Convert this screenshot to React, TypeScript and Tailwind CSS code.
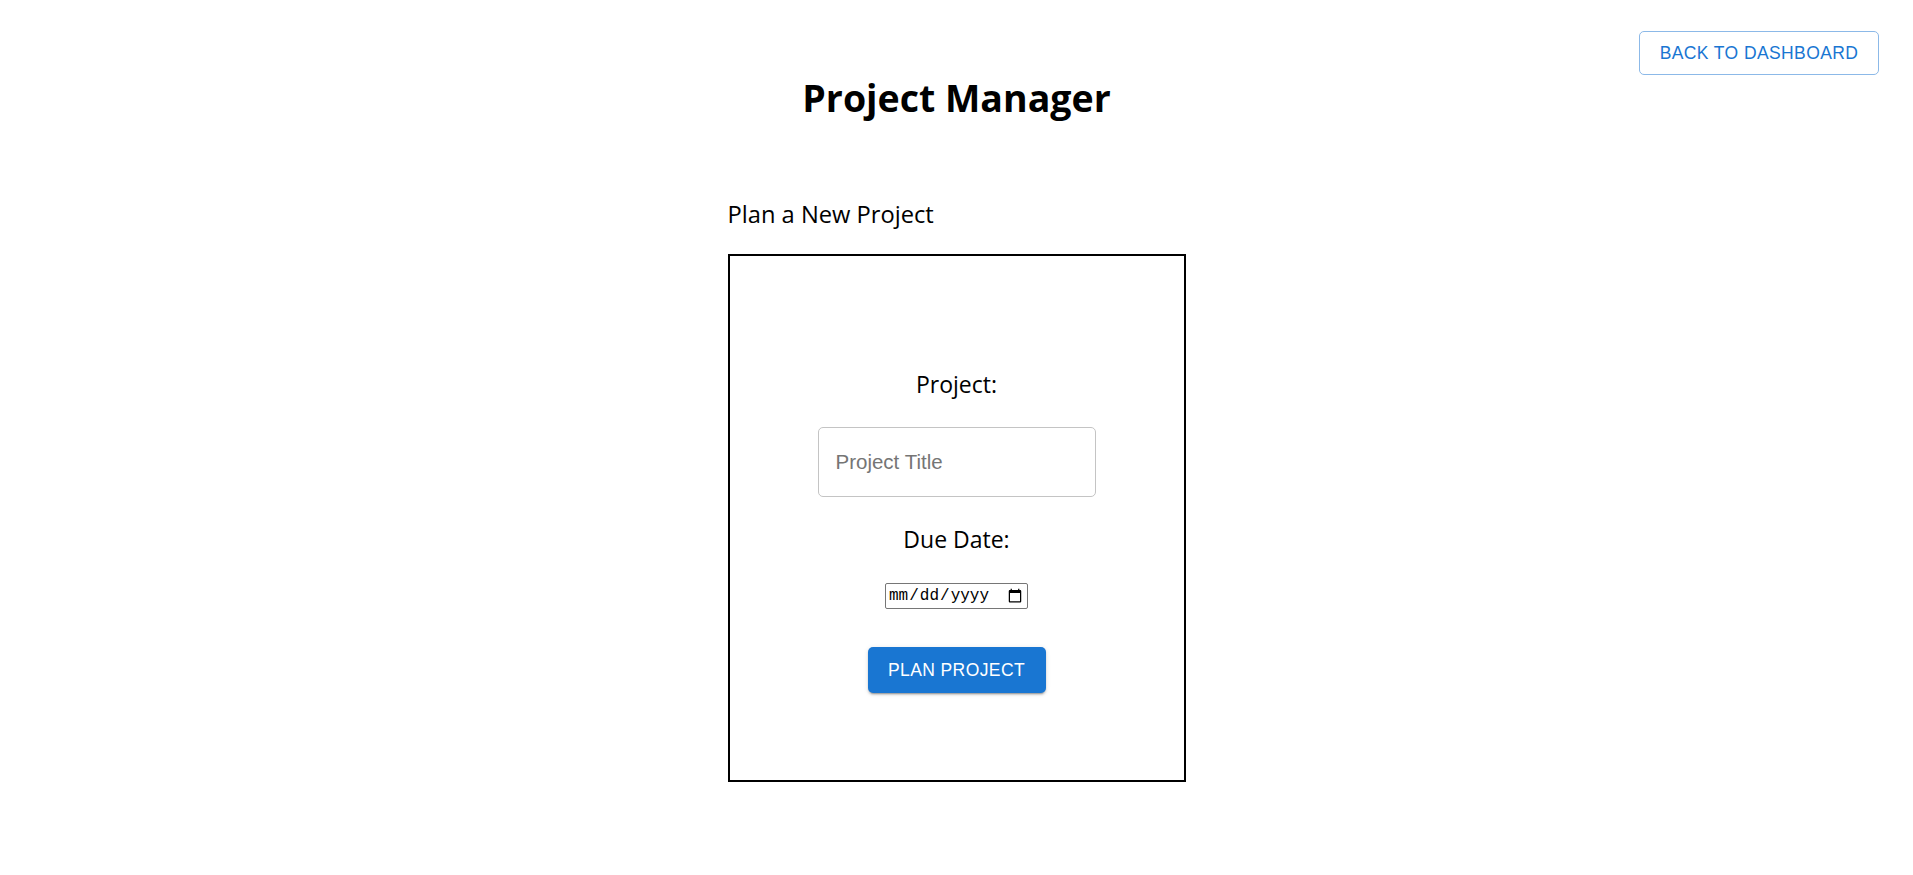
import { useState } from 'react'

export default function App() {
  const [title, setTitle] = useState('')
  const [due, setDue] = useState('')

  return (
    <div className="min-h-screen bg-white font-['Open_Sans',sans-serif] text-black">
      <div className="flex justify-end pt-[31px] pr-[34px]">
        <button className="h-[44px] w-[240px] rounded-[5px] border border-[#8cb9e8] font-['Liberation_Sans',Arial,sans-serif] text-[17.5px] uppercase tracking-[0.4px] text-[#1976d2]">
          Back to Dashboard
        </button>
      </div>

      <h1 className="mt-[4px] text-center text-[37.5px] font-bold leading-[38px]">Project Manager</h1>

      <div className="mx-auto mt-[81px] w-[458px]">
        <h2 className="text-[23.7px] leading-[32px]">Plan a New Project</h2>

        <div className="mt-[24px] flex h-[528px] flex-col items-center border-2 border-black pt-[112px]">
          <label className="text-[23px] leading-[32px]">Project:</label>
          <input
            value={title}
            onChange={(e) => setTitle(e.target.value)}
            placeholder="Project Title"
            className="mt-[27px] h-[70px] w-[278px] rounded-[5px] border border-[#c4c4c4] px-[17px] font-['Liberation_Sans',Arial,sans-serif] text-[20.5px] outline-none placeholder:text-[#757575]"
          />
          <label className="mt-[26px] text-[23px] leading-[32px]">Due Date:</label>
          <input
            type="date"
            value={due}
            onChange={(e) => setDue(e.target.value)}
            className="mt-[28px] h-[26px] w-[143px] rounded-[2px] border border-[#767676] px-[2px] font-['Liberation_Mono',monospace] text-[16px]"
          />
          <button className="mt-[38px] h-[46px] w-[178px] rounded-[5px] bg-[#1976d2] font-['Liberation_Sans',Arial,sans-serif] text-[17.5px] font-medium uppercase tracking-[0.4px] text-white shadow-[0_3px_1px_-2px_rgba(0,0,0,0.2),0_2px_2px_0_rgba(0,0,0,0.14),0_1px_5px_0_rgba(0,0,0,0.12)]">
            Plan Project
          </button>
        </div>
      </div>
    </div>
  )
}
